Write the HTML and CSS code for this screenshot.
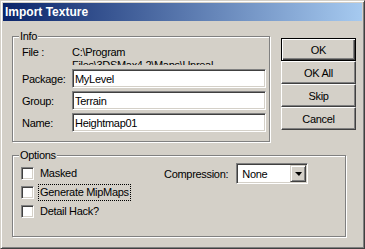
FILE: index.html
```html
<!DOCTYPE html>
<html lang="en">
<head>
    <meta charset="UTF-8">
    <title>Import Texture</title>
    <link rel="stylesheet" href="styles.css">
</head>
<body>
    <div class="window">
        <div class="titlebar">Import Texture</div>

        <div class="dialog">
            <div class="main">
                <fieldset class="group info">
                    <legend>Info</legend>
                    <div class="file-row">
                        <span class="label">File :</span>
                        <div class="file-path">C:\Program Files\3DSMax4.2\Maps\Unreal Tournament\Heightmap01.bmp</div>
                    </div>
                    <div class="field">
                        <span class="label">Package:</span>
                        <input type="text" value="MyLevel">
                    </div>
                    <div class="field">
                        <span class="label">Group:</span>
                        <input type="text" value="Terrain">
                    </div>
                    <div class="field">
                        <span class="label">Name:</span>
                        <input type="text" value="Heightmap01">
                    </div>
                </fieldset>

                <div class="buttons">
                    <button class="default">OK</button>
                    <button>OK All</button>
                    <button>Skip</button>
                    <button>Cancel</button>
                </div>
            </div>

            <fieldset class="group options">
                <legend>Options</legend>
                <div class="options-body">
                    <div class="checks">
                        <div class="check"><span class="box"></span><span class="text">Masked</span></div>
                        <div class="check"><span class="box"></span><span class="text focus">Generate MipMaps</span></div>
                        <div class="check"><span class="box"></span><span class="text">Detail Hack?</span></div>
                    </div>
                    <div class="compression">
                        <span>Compression:</span>
                        <div class="combo">
                            <span class="combo-value">None</span>
                            <span class="combo-btn"><span class="arrow"></span></span>
                        </div>
                    </div>
                </div>
            </fieldset>
        </div>
    </div>
</body>
</html>
```

FILE: styles.css
```css
body {
    margin: 0;
    background-color: #d4d0c8;
    font-family: "Liberation Sans", Arial, sans-serif;
    font-size: 11px;
    letter-spacing: -0.3px;
    color: #000;
}

.window {
    box-sizing: border-box;
    width: 365px;
    height: 249px;
    background-color: #d4d0c8;
    border: 1px solid;
    border-color: #d4d0c8 #404040 #404040 #d4d0c8;
    padding: 2px;
    box-shadow: inset 1px 1px #fff, inset -1px -1px #808080;
}

.titlebar {
    height: 18px;
    line-height: 18px;
    padding-left: 2px;
    color: white;
    font-weight: bold;
    font-size: 12px;
    letter-spacing: 0;
    background: linear-gradient(to right, #0a246a, #a6caf0);
}

.dialog {
    padding: 9px 0 0 9px;
}

.main {
    display: flex;
    align-items: flex-start;
}

.group {
    box-sizing: border-box;
    min-width: 0;
    margin: 0;
    border: 1px solid #808080;
    box-shadow: 1px 1px 0 #fff, inset 1px 1px 0 #fff;
}

.group legend {
    padding: 0 1px;
    line-height: 13px;
    background-color: #d4d0c8;
}

.info {
    width: 258px;
    padding: 3px 2px 9px 6px;
}

.file-row {
    display: flex;
    align-items: flex-start;
    height: 19px;
    overflow: hidden;
    margin: 0 0 4px 3px;
    line-height: 13px;
}

.label {
    width: 50px;
    flex-shrink: 0;
}

.file-path {
    width: 193px;
}

.field {
    display: flex;
    align-items: center;
    margin: 0 0 3px 3px;
}

.field:last-child {
    margin-bottom: 0;
}

.field input {
    box-sizing: border-box;
    width: 194px;
    height: 19px;
    margin: 0;
    padding: 0 2px;
    border: 1px solid;
    border-color: #808080 #fff #fff #808080;
    box-shadow: inset 1px 1px #404040, inset -1px -1px #d4d0c8;
    background: white;
    font: inherit;
    letter-spacing: inherit;
    outline: none;
}

.buttons {
    display: flex;
    flex-direction: column;
    width: 75px;
    margin: 8px 0 0 11px;
}

.buttons button {
    box-sizing: border-box;
    height: 23px;
    margin: 0;
    padding: 0;
    border: 1px solid;
    border-color: #fff #404040 #404040 #fff;
    box-shadow: inset -1px -1px #808080;
    background-color: #d4d0c8;
    font: inherit;
    letter-spacing: inherit;
    color: #000;
}

.buttons button.default {
    border-color: #000;
    box-shadow: inset 1px 1px #fff, inset -1px -1px #404040, inset -2px -2px #808080;
}

.options {
    width: 334px;
    margin-top: 7px;
    padding: 3px 2px 16px 6px;
}

.options-body {
    display: flex;
    align-items: flex-start;
    margin-left: 2px;
}

.checks {
    display: flex;
    flex-direction: column;
    gap: 2px;
    width: 143px;
}

.check {
    display: flex;
    align-items: center;
    height: 17px;
}

.box {
    box-sizing: border-box;
    width: 13px;
    height: 13px;
    border: 1px solid;
    border-color: #808080 #fff #fff #808080;
    box-shadow: inset 1px 1px #404040, inset -1px -1px #d4d0c8;
    background: white;
}

.check .text {
    margin-left: 4px;
    padding: 0 1px;
    line-height: 15px;
    border: 1px solid transparent;
}

.check .text.focus {
    border: 1px dotted #000;
}

.compression {
    display: flex;
    align-items: center;
    height: 17px;
}

.combo {
    box-sizing: border-box;
    display: flex;
    align-items: center;
    justify-content: space-between;
    width: 72px;
    height: 21px;
    margin-left: 8px;
    padding: 1px;
    border: 1px solid;
    border-color: #808080 #fff #fff #808080;
    box-shadow: inset 1px 1px #404040, inset -1px -1px #d4d0c8;
    background: white;
}

.combo-value {
    padding-left: 4px;
}

.combo-btn {
    box-sizing: border-box;
    display: flex;
    align-items: center;
    justify-content: center;
    width: 16px;
    height: 17px;
    border: 1px solid;
    border-color: #d4d0c8 #404040 #404040 #d4d0c8;
    box-shadow: inset 1px 1px #fff, inset -1px -1px #808080;
    background-color: #d4d0c8;
}

.arrow {
    width: 0;
    height: 0;
    border-left: 4px solid transparent;
    border-right: 3px solid transparent;
    border-top: 4px solid #000;
}
```
